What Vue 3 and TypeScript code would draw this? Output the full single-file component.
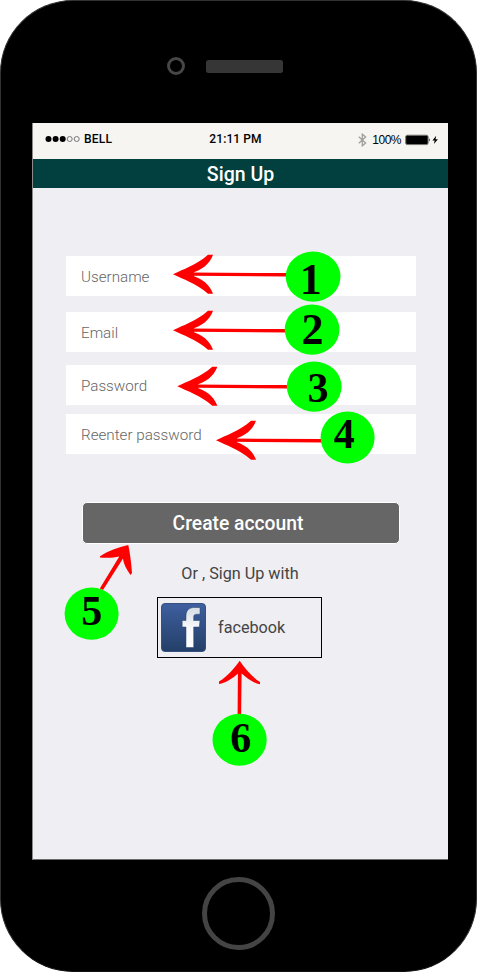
<script setup lang="ts">
import { reactive } from 'vue'

interface Field {
  key: string
  label: string
  type: string
}

interface Marker {
  n: number
  cx: number
  cy: number
  rx: number
  ry: number
  tx: number
  ty: number
  size: number
}

const fields: Field[] = [
  { key: 'username', label: 'Username', type: 'text' },
  { key: 'email', label: 'Email', type: 'text' },
  { key: 'password', label: 'Password', type: 'password' },
  { key: 'confirm', label: 'Reenter password', type: 'password' },
]
const form = reactive<Record<string, string>>({ username: '', email: '', password: '', confirm: '' })

const markers: Marker[] = [
  { n: 1, cx: 313.1, cy: 276.6, rx: 27.4, ry: 25.1, tx: 310.7, ty: 294.3, size: 44 },
  { n: 2, cx: 312.1, cy: 329.6, rx: 27.4, ry: 25.1, tx: 312.5, ty: 344.3, size: 44 },
  { n: 3, cx: 314.2, cy: 386.6, rx: 27.4, ry: 25.1, tx: 318, ty: 401.5, size: 42 },
  { n: 4, cx: 347.6, cy: 437.6, rx: 27, ry: 26, tx: 344.3, ty: 448, size: 42 },
  { n: 5, cx: 91.6, cy: 613.6, rx: 27, ry: 26.2, tx: 91.8, ty: 624.500, size: 42 },
  { n: 6, cx: 239.6, cy: 739.7, rx: 27.1, ry: 26, tx: 240.7, ty: 751.500, size: 42 },
]

// Left-pointing arrows: tip position and shaft length
const arrows = [
  { x: 173, y: 274.3, len: 114 },
  { x: 173, y: 330.3, len: 113 },
  { x: 177.3, y: 386.3, len: 111 },
  { x: 216, y: 440.3, len: 106 },
]
</script>

<template>
  <div class="phone">
    <div class="top">
      <span class="camera"></span>
      <span class="speaker"></span>
    </div>

    <main class="screen">
      <div class="status">
        <div class="carrier">
          <svg width="36" height="8" viewBox="0 0 36 8">
            <circle cx="3.5" cy="4" r="3" />
            <circle cx="10.6" cy="4" r="3" />
            <circle cx="17.7" cy="4" r="3" />
            <circle class="empty" cx="24.7" cy="4" r="2.5" />
            <circle class="empty" cx="31.7" cy="4" r="2.5" />
          </svg>
          <span>BELL</span>
        </div>
        <span class="time">21:11 PM</span>
        <div class="power">
          <svg width="9" height="14" viewBox="0 0 9 14">
            <path d="M.8 3.8 7.6 9.9 4.3 12.8V1.2L7.6 4.1.8 10.2" fill="none" stroke="#a09f9d" stroke-width="1.3" />
          </svg>
          <span class="percent">100%</span>
          <svg width="34" height="12" viewBox="0 0 34 12">
            <rect x=".7" y="1.2" width="22.4" height="9.4" rx="1.6" fill="#000" stroke="#777" />
            <path d="M24.2 4.2q1.6 1.7 0 3.4z" />
            <path d="M31.2 1.8 27.4 6.5h2.3l-.8 3.6 4-4.9h-2.4z" />
          </svg>
        </div>
      </div>

      <h1 class="title">Sign Up</h1>

      <form class="form" @submit.prevent>
        <input
          v-for="f in fields"
          :key="f.key"
          v-model="form[f.key]"
          class="field"
          :class="f.key"
          :type="f.type"
          :placeholder="f.label"
        />
        <button class="create" type="submit">Create account</button>
      </form>

      <p class="or">Or , Sign Up with</p>
      <button class="facebook" type="button">
        <svg width="45" height="49" viewBox="0 0 45 49">
          <defs>
            <linearGradient id="fb-bg" x1="0" y1="0" x2="0" y2="1">
              <stop offset="0" stop-color="#3f5f9f" />
              <stop offset="1" stop-color="#233f68" />
            </linearGradient>
            <linearGradient id="fb-f" x1="0" y1="0" x2="0" y2="1">
              <stop offset="0" stop-color="#d5dde5" />
              <stop offset=".5" stop-color="#f8f9fa" />
              <stop offset="1" stop-color="#fff" />
            </linearGradient>
          </defs>
          <rect x=".5" y=".5" width="44" height="48" rx="3.5" fill="url(#fb-bg)" stroke="#35517f" />
          <path
            d="M25 44.5V24H21.200V17.500H25V13C25 7 28.500 4.500 33.500 4.500H39V11.200H36C33.500 11.200 32.700 12 32.700 14V17.500H39L38.300 24H32.700V44.500Z"
            fill="url(#fb-f)"
            stroke="#24406f"
            stroke-width=".5"
          />
        </svg>
        <span>facebook</span>
      </button>
    </main>

    <div class="home"></div>

    <svg class="notes" width="477" height="973" viewBox="0 0 477 973">
      <g fill="#f00">
        <g v-for="(a, i) in arrows" :key="i" :transform="`translate(${a.x} ${a.y})`">
          <path d="M0 0C10-5 23-9 35-19.500H40C38-14 33-6 21-2V2C33 6 38 14 40 19.500H35C23 9 10 5 0 0Z" />
          <path :d="`M18-1.700L${a.len}-1.200V2.200L18 1.500Z`" />
        </g>
        <path d="M128.300 545C118 547.500 108 551 100 556.200V557.500C106 558 114 558 119.300 556.500L99.800 588.500 103 590 123 558.500C123.500 564 127 570 130.500 575L132 573C131.300 563 130 553 128.300 545Z" />
        <path d="M239.700 660.700C234 668.500 228 676 219 681.500V684C226 683 233 678 237.900 673.500L237.600 716H241.100L241.600 673.500C247 678 253 683 260 684.300V682C252 677 245 668.500 239.700 660.700Z" />
      </g>
      <g v-for="m in markers" :key="m.n">
        <ellipse :cx="m.cx" :cy="m.cy" :rx="m.rx" :ry="m.ry" fill="#0f0" />
        <text class="number" :x="m.tx" :y="m.ty" :font-size="m.size">{{ m.n }}</text>
      </g>
    </svg>
  </div>
</template>

<style>
body {
  margin: 0;
  background: #fff;
}
</style>

<style scoped>
.phone {
  position: relative;
  box-sizing: border-box;
  width: 477px;
  height: 972px;
  border: 1px solid #303132;
  border-bottom-color: #111;
  border-radius: 73px;
  background: #000;
  font-family: Roboto, 'Liberation Sans', sans-serif;
  overflow: hidden;
}
.top {
  box-sizing: border-box;
  height: 122px;
  padding: 56px 0 0 166px;
  display: flex;
  align-items: flex-start;
  gap: 21px;
}
.camera {
  box-sizing: border-box;
  width: 18px;
  height: 18px;
  border: 3px solid #464646;
  border-radius: 50%;
}
.speaker {
  width: 77px;
  height: 13px;
  margin-top: 3px;
  border-radius: 2.500px;
  background: #363636;
}
.screen {
  box-sizing: border-box;
  width: 416px;
  height: 737px;
  margin-left: 31px;
  border-left: 1px solid #8a8a8a;
  border-bottom: 1px solid #6a6a6a;
  background: #eeeef3;
}
.status {
  box-sizing: border-box;
  height: 36px;
  padding: 0 9px 4px 12px;
  display: grid;
  grid-template-columns: 1fr auto 1fr;
  align-items: center;
  background: #f6f5f1;
  color: #000;
  font-size: 12px;
  font-weight: 500;
}
.carrier,
.power {
  display: flex;
  align-items: center;
}
.carrier {
  gap: 3px;
  letter-spacing: 0.200px;
}
.empty {
  fill: none;
  stroke: #777;
  stroke-width: 1;
}
.time {
  margin-right: 13px;
  letter-spacing: 0.100px;
}
.power {
  justify-content: flex-end;
  padding-top: 1px;
}
.percent {
  margin: 0 4px 0 5px;
  font-family: 'Liberation Sans', sans-serif;
  font-size: 12px;
  font-weight: 400;
  letter-spacing: -0.500px;
}
.title {
  height: 29px;
  margin: 0;
  background: #023f3f;
  color: #fff;
  font-size: 19.500px;
  font-weight: 500;
  line-height: 31px;
  text-align: center;
}
.form {
  display: flex;
  flex-direction: column;
  padding: 68px 32px 0 33px;
}
.field {
  box-sizing: border-box;
  height: 40px;
  margin: 0;
  padding: 1px 15px 0;
  border: 0;
  border-radius: 0;
  background: #fff;
  font-family: inherit;
  font-size: 15.200px;
  font-weight: 300;
  color: #444;
  outline: 0;
}
.field::placeholder {
  color: #666;
  opacity: 1;
}
.email {
  margin-top: 16px;
}
.password {
  margin-top: 13px;
}
.confirm {
  margin-top: 9px;
}
.create {
  box-sizing: border-box;
  width: 318px;
  height: 42px;
  margin: 48px 0 0 16px;
  padding: 0 6px 0 0;
  border: 1px solid #fff;
  border-radius: 5px;
  background: #666;
  color: #fff;
  font-family: inherit;
  font-size: 19.300px;
  font-weight: 500;
}
.or {
  margin: 20px 0 0;
  color: #444;
  font-size: 16.200px;
  line-height: 20px;
  padding-right: 1px;
  text-align: center;
}
.facebook {
  box-sizing: border-box;
  width: 165px;
  height: 61px;
  margin: 13px 0 0 124px;
  padding: 0 0 0 3px;
  display: flex;
  align-items: center;
  gap: 12px;
  border: 1px solid #000;
  background: none;
  color: #444;
  font-family: inherit;
  font-size: 16.200px;
}
.home {
  box-sizing: border-box;
  width: 73px;
  height: 73px;
  margin: 17px 0 0 201px;
  border: 5px solid #444;
  border-radius: 50%;
}
.notes {
  position: absolute;
  top: -1px;
  left: -1px;
  pointer-events: none;
}
.number {
  font-family: 'Liberation Serif', serif;
  font-weight: 700;
  text-anchor: middle;
}
</style>
